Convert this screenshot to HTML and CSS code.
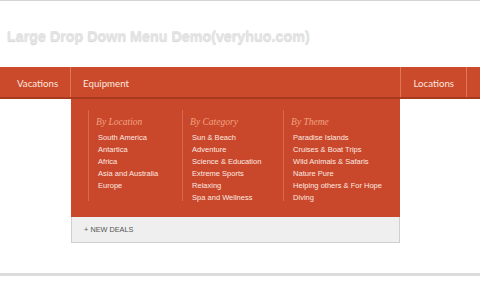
FILE: index.html
```html
<!DOCTYPE html>
<html lang="en">
<head>
  <meta charset="UTF-8">
  <title>Large Drop Down Menu Demo</title>
  <link rel="stylesheet" href="styles.css">
</head>
<body>
  <div class="page">
    <h1 class="title">Large Drop Down Menu Demo(veryhuo.com)</h1>
    <nav class="menu">
      <ul class="menu-list">
        <li class="first"><a href="#">Vacations</a></li>
        <li class="open">
          <a href="#">Equipment</a>
          <div class="dropdown">
            <div class="cols">
              <div class="col c1">
                <h3>By Location</h3>
                <ul>
                  <li>South America</li>
                  <li>Antartica</li>
                  <li>Africa</li>
                  <li>Asia and Australia</li>
                  <li>Europe</li>
                </ul>
              </div>
              <div class="col c2">
                <h3>By Category</h3>
                <ul>
                  <li>Sun &amp; Beach</li>
                  <li>Adventure</li>
                  <li>Science &amp; Education</li>
                  <li>Extreme Sports</li>
                  <li>Relaxing</li>
                  <li>Spa and Wellness</li>
                </ul>
              </div>
              <div class="col c3">
                <h3>By Theme</h3>
                <ul>
                  <li>Paradise Islands</li>
                  <li>Cruises &amp; Boat Trips</li>
                  <li>Wild Animals &amp; Safaris</li>
                  <li>Nature Pure</li>
                  <li>Helping others &amp; For Hope</li>
                  <li>Diving</li>
                </ul>
              </div>
            </div>
            <div class="deals">+ NEW DEALS</div>
          </div>
        </li>
        <li class="spacer"></li>
        <li class="last"><a href="#">Locations</a></li>
      </ul>
    </nav>
    <div class="content"></div>
  </div>
</body>
</html>
```

FILE: styles.css
```css
* {
  margin: 0;
  padding: 0;
  box-sizing: border-box;
}

body {
  background: #fff;
  font-family: 'Liberation Sans', Arial, sans-serif;
}

.page {
  border-top: 1px solid #d4d4d4;
}

.title {
  height: 66px;
  padding: 26px 0 0 7px;
  font-size: 14.3px;
  line-height: 18px;
  font-weight: bold;
  color: #e4e4e4;
  text-shadow: 0 1px 1px #d4d4d4;
}

.menu {
  background: #cc4a2c;
  border-bottom: 2px solid #a83a20;
  height: 32px;
}

.menu-list {
  list-style: none;
  display: flex;
  height: 30px;
}

.menu-list > li {
  position: relative;
  display: flex;
  align-items: center;
}

.menu-list > li > a {
  font-family: Lato, 'Open Sans', sans-serif;
  font-size: 9.7px;
  color: #fbe7df;
  text-decoration: none;
  padding: 1px 12px 0;
}

.menu-list .first {
  border-right: 1px solid #e0765a;
}

.menu-list .first a {
  padding: 1px 12px 0 17px;
}

.menu-list .spacer {
  flex: 1;
}

.menu-list .last {
  border-left: 1px solid #e0765a;
  border-right: 1px solid #e0765a;
  margin-right: 13px;
}

.dropdown {
  position: absolute;
  top: 32px;
  left: 0;
  width: 329px;
  z-index: 5;
}

.cols {
  background: #c9472a;
  display: flex;
  padding: 17px 0 16px 17px;
  height: 118px;
}

.col {
  border-left: 1px solid #d9684c;
  padding-left: 7px;
  margin-top: -6px;
  padding-top: 6px;
}

.c1 { width: 94px; }
.c2 { width: 101px; }
.c3 { flex: 1; }

.col h3 {
  font-family: 'Liberation Serif', Georgia, serif;
  font-style: italic;
  font-weight: normal;
  font-size: 9.5px;
  line-height: 12px;
  color: #f2a383;
  margin-bottom: 4px;
}

.col ul {
  list-style: none;
  padding-left: 2px;
}

.col li {
  font-size: 7.5px;
  line-height: 12px;
  color: #fbe9e1;
}

.deals {
  background: #efefef;
  border: 1px solid #cfcfcf;
  border-top: none;
  height: 26px;
  padding: 8px 0 0 12px;
  font-size: 7.3px;
  color: #555;
}

.content {
  height: 177px;
  border-bottom: 3px solid #dcdcdc;
}
```
